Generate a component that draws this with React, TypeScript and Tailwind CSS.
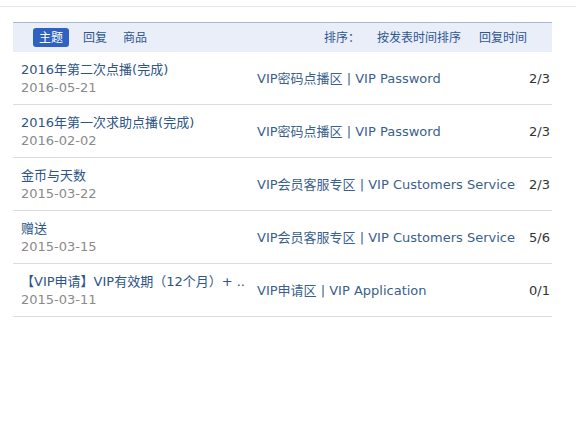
const rows = [
  { title: '2016年第二次点播(完成)', date: '2016-05-21', forum: 'VIP密码点播区 | VIP Password', count: '2/3' },
  { title: '2016年第一次求助点播(完成)', date: '2016-02-02', forum: 'VIP密码点播区 | VIP Password', count: '2/3' },
  { title: '金币与天数', date: '2015-03-22', forum: 'VIP会员客服专区 | VIP Customers Service', count: '2/3' },
  { title: '赠送', date: '2015-03-15', forum: 'VIP会员客服专区 | VIP Customers Service', count: '5/6' },
  { title: '【VIP申请】VIP有效期（12个月）+ ..', date: '2015-03-11', forum: 'VIP申请区 | VIP Application', count: '0/1' },
];

export default function App() {
  return (
    <div
      className="w-[576px] h-[435px] bg-white text-[13px] leading-[18px]"
      style={{ fontFamily: '"DejaVu Sans", "Noto Sans CJK SC", sans-serif' }}
    >
      <div className="h-[6px]" />
      <div className="border-t border-[#e6e6e6] pt-[15px]">
        <div className="ml-[13px] w-[539px]">
          {/* tab bar */}
          <div className="h-[30px] border-t border-[#a9b9cf] bg-[#e9eef8] flex items-center text-[12px] text-[#2f5690]">
            <span className="ml-[20px] h-[19px] px-[6px] rounded-[3px] bg-[#2f62c0] text-white flex items-center">主题</span>
            <span className="ml-[14px]">回复</span>
            <span className="ml-[16px]">商品</span>
            <span className="ml-auto">排序：</span>
            <span className="ml-[17px]">按发表时间排序</span>
            <span className="ml-[18px] mr-[25px]">回复时间</span>
          </div>
          {rows.map((r) => (
            <div key={r.date + r.title} className="h-[53px] border-b border-[#dcdcdc] flex items-center pt-[2px]">
              <div className="w-[244px] pl-[8px]">
                <div className="text-[#2d5585] truncate">{r.title}</div>
                <div className="text-[#8a8a8a]">{r.date}</div>
              </div>
              <div className="flex-1 whitespace-nowrap text-[#3a5f8c]">{r.forum}</div>
              <div className="w-[30px] text-right pr-[2px] text-[#333]">{r.count}</div>
            </div>
          ))}
        </div>
      </div>
    </div>
  );
}
